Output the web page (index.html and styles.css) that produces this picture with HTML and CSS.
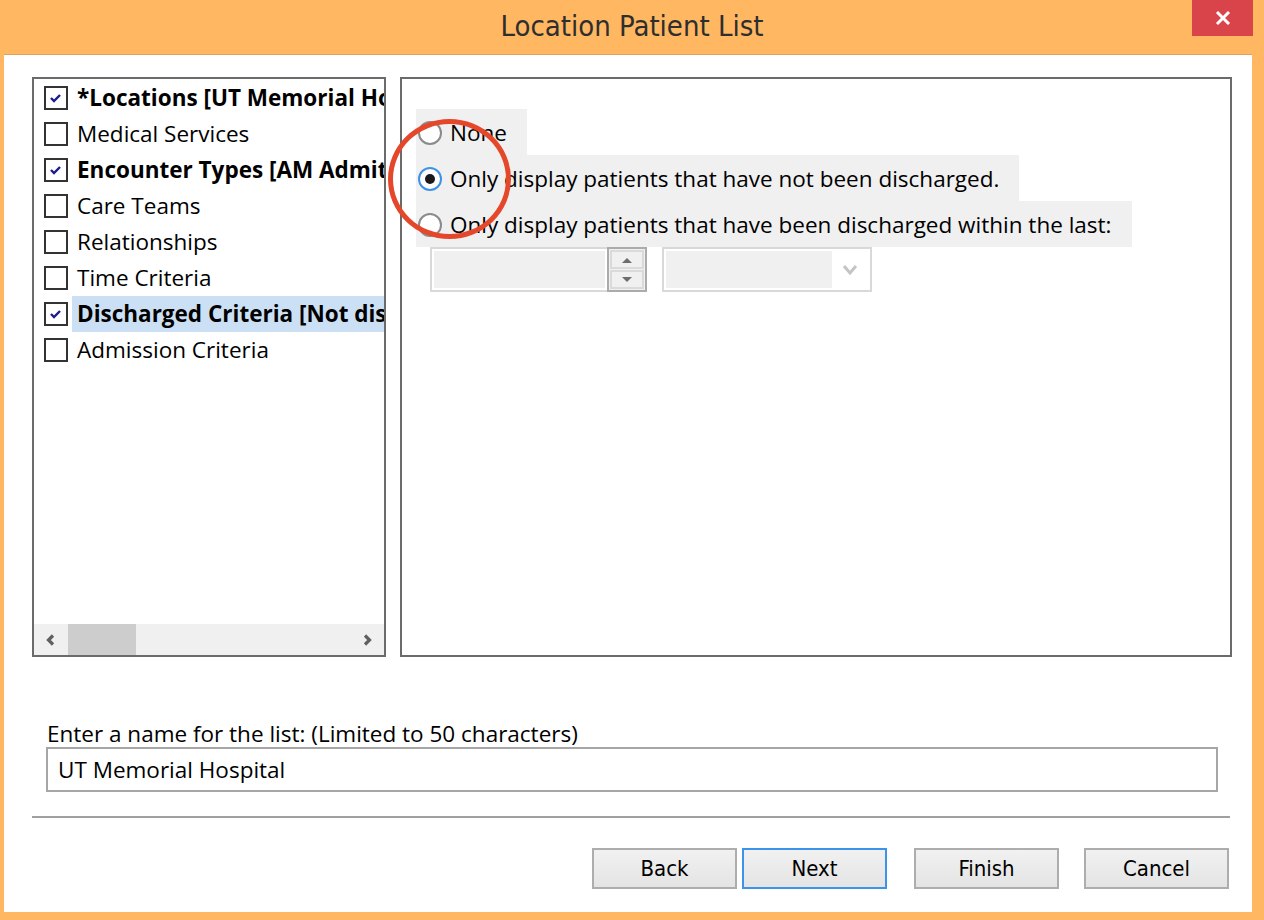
FILE: index.html
```html
<!DOCTYPE html>
<html lang="en">
<head>
    <meta charset="UTF-8">
    <meta name="viewport" content="width=device-width, initial-scale=1.0">
    <title>Location Patient List</title>
    <link rel="stylesheet" href="styles.css">
</head>
<body>
    <div class="window">
        <header class="titlebar">
            <span></span>
            <h1 class="title">Location Patient List</h1>
            <button class="close" aria-label="Close">
                <svg width="16" height="16" viewBox="0 0 16 16"><path d="M2 2 L14 14 M14 2 L2 14" stroke="#fff" stroke-width="3"/></svg>
            </button>
        </header>

        <main class="dialog">
            <div class="panels">
                <div class="tree">
                    <ul class="tree-list">
                        <li class="item checked"><span class="check"><svg width="14" height="12" viewBox="0 0 14 12"><path d="M2 6 L5 9 L11 3" fill="none" stroke="#1c1c8c" stroke-width="2.4"/></svg></span><span class="label">*Locations [UT Memorial Hospital]</span></li>
                        <li class="item"><span class="check"></span><span class="label">Medical Services</span></li>
                        <li class="item checked"><span class="check"><svg width="14" height="12" viewBox="0 0 14 12"><path d="M2 6 L5 9 L11 3" fill="none" stroke="#1c1c8c" stroke-width="2.4"/></svg></span><span class="label">Encounter Types [AM Admit, Inpatient]</span></li>
                        <li class="item"><span class="check"></span><span class="label">Care Teams</span></li>
                        <li class="item"><span class="check"></span><span class="label">Relationships</span></li>
                        <li class="item"><span class="check"></span><span class="label">Time Criteria</span></li>
                        <li class="item checked selected"><span class="check"><svg width="14" height="12" viewBox="0 0 14 12"><path d="M2 6 L5 9 L11 3" fill="none" stroke="#1c1c8c" stroke-width="2.4"/></svg></span><span class="label">Discharged Criteria [Not discharged]</span></li>
                        <li class="item"><span class="check"></span><span class="label">Admission Criteria</span></li>
                    </ul>
                    <div class="hscroll">
                        <span class="scroll-arrow">
                            <svg width="14" height="14" viewBox="0 0 14 14"><path d="M9 2.5 L4.5 7 L9 11.5" fill="none" stroke="#606060" stroke-width="3.2"/></svg>
                        </span>
                        <span class="scroll-track"><span class="scroll-thumb"></span></span>
                        <span class="scroll-arrow">
                            <svg width="14" height="14" viewBox="0 0 14 14"><path d="M5 2.5 L9.5 7 L5 11.5" fill="none" stroke="#606060" stroke-width="3.2"/></svg>
                        </span>
                    </div>
                </div>

                <div class="criteria">
                    <label class="radio-row"><span class="radio"></span>None</label>
                    <label class="radio-row"><span class="radio on"></span>Only display patients that have not been discharged.</label>
                    <label class="radio-row"><span class="radio"></span>Only display patients that have been discharged within the last:</label>
                    <div class="range-row">
                        <div class="spin">
                            <span class="spin-input"></span>
                            <span class="spin-buttons">
                                <span class="spin-btn"><svg width="12" height="6" viewBox="0 0 12 6"><path d="M1 6 L6 1 L11 6 Z" fill="#6d6d6d"/></svg></span>
                                <span class="spin-btn"><svg width="12" height="6" viewBox="0 0 12 6"><path d="M1 0 L6 5 L11 0 Z" fill="#6d6d6d"/></svg></span>
                            </span>
                        </div>
                        <div class="combo">
                            <span class="combo-value"></span>
                            <span class="combo-arrow"><svg width="16" height="12" viewBox="0 0 16 12"><path d="M2 2 L8 9 L14 2" fill="none" stroke="#c4c4c4" stroke-width="3"/></svg></span>
                        </div>
                    </div>
                    <span class="annotation"></span>
                </div>
            </div>

            <div class="name-field">
                <label class="name-label">Enter a name for the list: (Limited to 50 characters)</label>
                <div class="text-input">UT Memorial Hospital</div>
            </div>

            <hr class="separator">

            <div class="buttons">
                <button class="btn">Back</button>
                <button class="btn default">Next</button>
                <button class="btn finish">Finish</button>
                <button class="btn cancel">Cancel</button>
            </div>
        </main>
    </div>
</body>
</html>
```

FILE: styles.css
```css
* {
    box-sizing: border-box;
    margin: 0;
    padding: 0;
}

body {
    background-color: #ffb762;
    font-family: "Open Sans", "Noto Sans", sans-serif;
    color: #000;
}

.window {
    width: 1264px;
    height: 920px;
    display: flex;
    flex-direction: column;
}

.titlebar {
    height: 54px;
    display: grid;
    grid-template-columns: 1fr auto 1fr;
    flex-shrink: 0;
}

.title {
    font-family: "DejaVu Sans", sans-serif;
    font-stretch: condensed;
    font-weight: normal;
    font-size: 29px;
    color: #2e2e2e;
    line-height: 52px;
}

.close {
    justify-self: end;
    align-self: start;
    width: 61px;
    height: 36px;
    margin-right: 11px;
    border: none;
    background-color: #d9434a;
    display: flex;
    align-items: center;
    justify-content: center;
}

.dialog {
    flex: 1;
    margin: 0 12px 8px 4px;
    background-color: #fff;
    border-top: 1px solid #e3a057;
    padding: 22px 20px 0 28px;
    display: flex;
    flex-direction: column;
}

.panels {
    display: flex;
    gap: 14px;
    height: 580px;
}

/* left tree with checkboxes */
.tree {
    width: 354px;
    border: 2px solid #6b6b6b;
    display: flex;
    flex-direction: column;
    overflow: hidden;
}

.tree-list {
    list-style: none;
    flex: 1;
    padding: 1px 0 0 10px;
}

.item {
    display: flex;
    align-items: center;
    height: 36px;
    font-size: 22.5px;
    white-space: nowrap;
}

.item.checked .label {
    font-weight: bold;
}

.check {
    width: 24px;
    height: 24px;
    flex-shrink: 0;
    border: 2px solid #333;
    background-color: #fff;
    display: flex;
    align-items: center;
    justify-content: center;
    margin-right: 4px;
}

.label {
    flex: 1;
    height: 36px;
    line-height: 36px;
    padding-left: 5px;
    overflow: hidden;
}

.item.selected .label {
    background-color: #cce0f5;
}

.hscroll {
    height: 31px;
    background-color: #f0f0f0;
    display: flex;
}

.scroll-arrow {
    width: 34px;
    display: flex;
    align-items: center;
    justify-content: center;
}

.scroll-track {
    flex: 1;
}

.scroll-thumb {
    display: block;
    width: 68px;
    height: 100%;
    background-color: #cdcdcd;
}

/* right criteria panel */
.criteria {
    flex: 1;
    position: relative;
    border: 2px solid #6b6b6b;
    padding: 30px 0 0 14px;
    display: flex;
    flex-direction: column;
    align-items: flex-start;
}

.radio-row {
    display: flex;
    align-items: center;
    height: 46px;
    padding: 1px 20px 0 2px;
    background-color: #f0f0f0;
    font-size: 22.5px;
    white-space: nowrap;
}

.radio {
    width: 24px;
    height: 24px;
    border: 2px solid #8a8a8a;
    border-radius: 50%;
    background-color: #fff;
    margin-right: 8px;
    display: flex;
    align-items: center;
    justify-content: center;
}

.radio.on {
    border-color: #3e92e6;
}

.radio.on::after {
    content: "";
    width: 10px;
    height: 10px;
    border-radius: 50%;
    background-color: #1a1a1a;
}

.range-row {
    display: flex;
    gap: 15px;
    margin-left: 14px;
}

.spin {
    display: flex;
    height: 45px;
}

.spin-input {
    width: 177px;
    border: 2px solid #d9d9d9;
    border-right: none;
    background-color: #f0f0f0;
    box-shadow: inset 0 0 0 2px #fff;
}

.spin-buttons {
    width: 40px;
    border: 2px solid #ababab;
    display: flex;
    flex-direction: column;
    padding: 1px;
    gap: 1px;
    background-color: #f0f0f0;
}

.spin-btn {
    flex: 1;
    border: 2px solid #dadada;
    display: flex;
    align-items: center;
    justify-content: center;
}

.combo {
    width: 210px;
    height: 45px;
    border: 2px solid #d9d9d9;
    display: flex;
    padding: 2px;
}

.combo-value {
    flex: 1;
    background-color: #f0f0f0;
}

.combo-arrow {
    width: 36px;
    display: flex;
    align-items: center;
    justify-content: center;
}

.annotation {
    position: absolute;
    left: -14px;
    top: 40px;
    width: 123px;
    height: 120px;
    border: 5px solid #e5472b;
    border-radius: 50%;
}

/* name field and buttons */
.name-field {
    margin-top: 62px;
}

.name-label {
    display: block;
    margin-left: 15px;
    font-size: 22.5px;
    line-height: 30px;
}

.text-input {
    margin-left: 14px;
    width: 1172px;
    height: 45px;
    border: 2px solid #a6a6a6;
    padding-left: 10px;
    font-size: 22.5px;
    line-height: 41px;
    margin-top: -2px;
}

.separator {
    margin-top: 24px;
    width: 1198px;
    border: none;
    border-top: 2px solid #a0a0a0;
}

.buttons {
    display: flex;
    justify-content: flex-end;
    margin-top: 30px;
    margin-right: 3px;
}

.btn {
    width: 145px;
    height: 41px;
    border: 2px solid #adadad;
    background: linear-gradient(#f1f1f1, #e4e4e4);
    font-family: "DejaVu Sans", sans-serif;
    font-stretch: condensed;
    font-size: 22px;
    color: #000;
    margin-left: 5px;
}

.btn.default {
    border-color: #3c93ea;
}

.btn.finish {
    margin-left: 27px;
}

.btn.cancel {
    margin-left: 25px;
}
```
